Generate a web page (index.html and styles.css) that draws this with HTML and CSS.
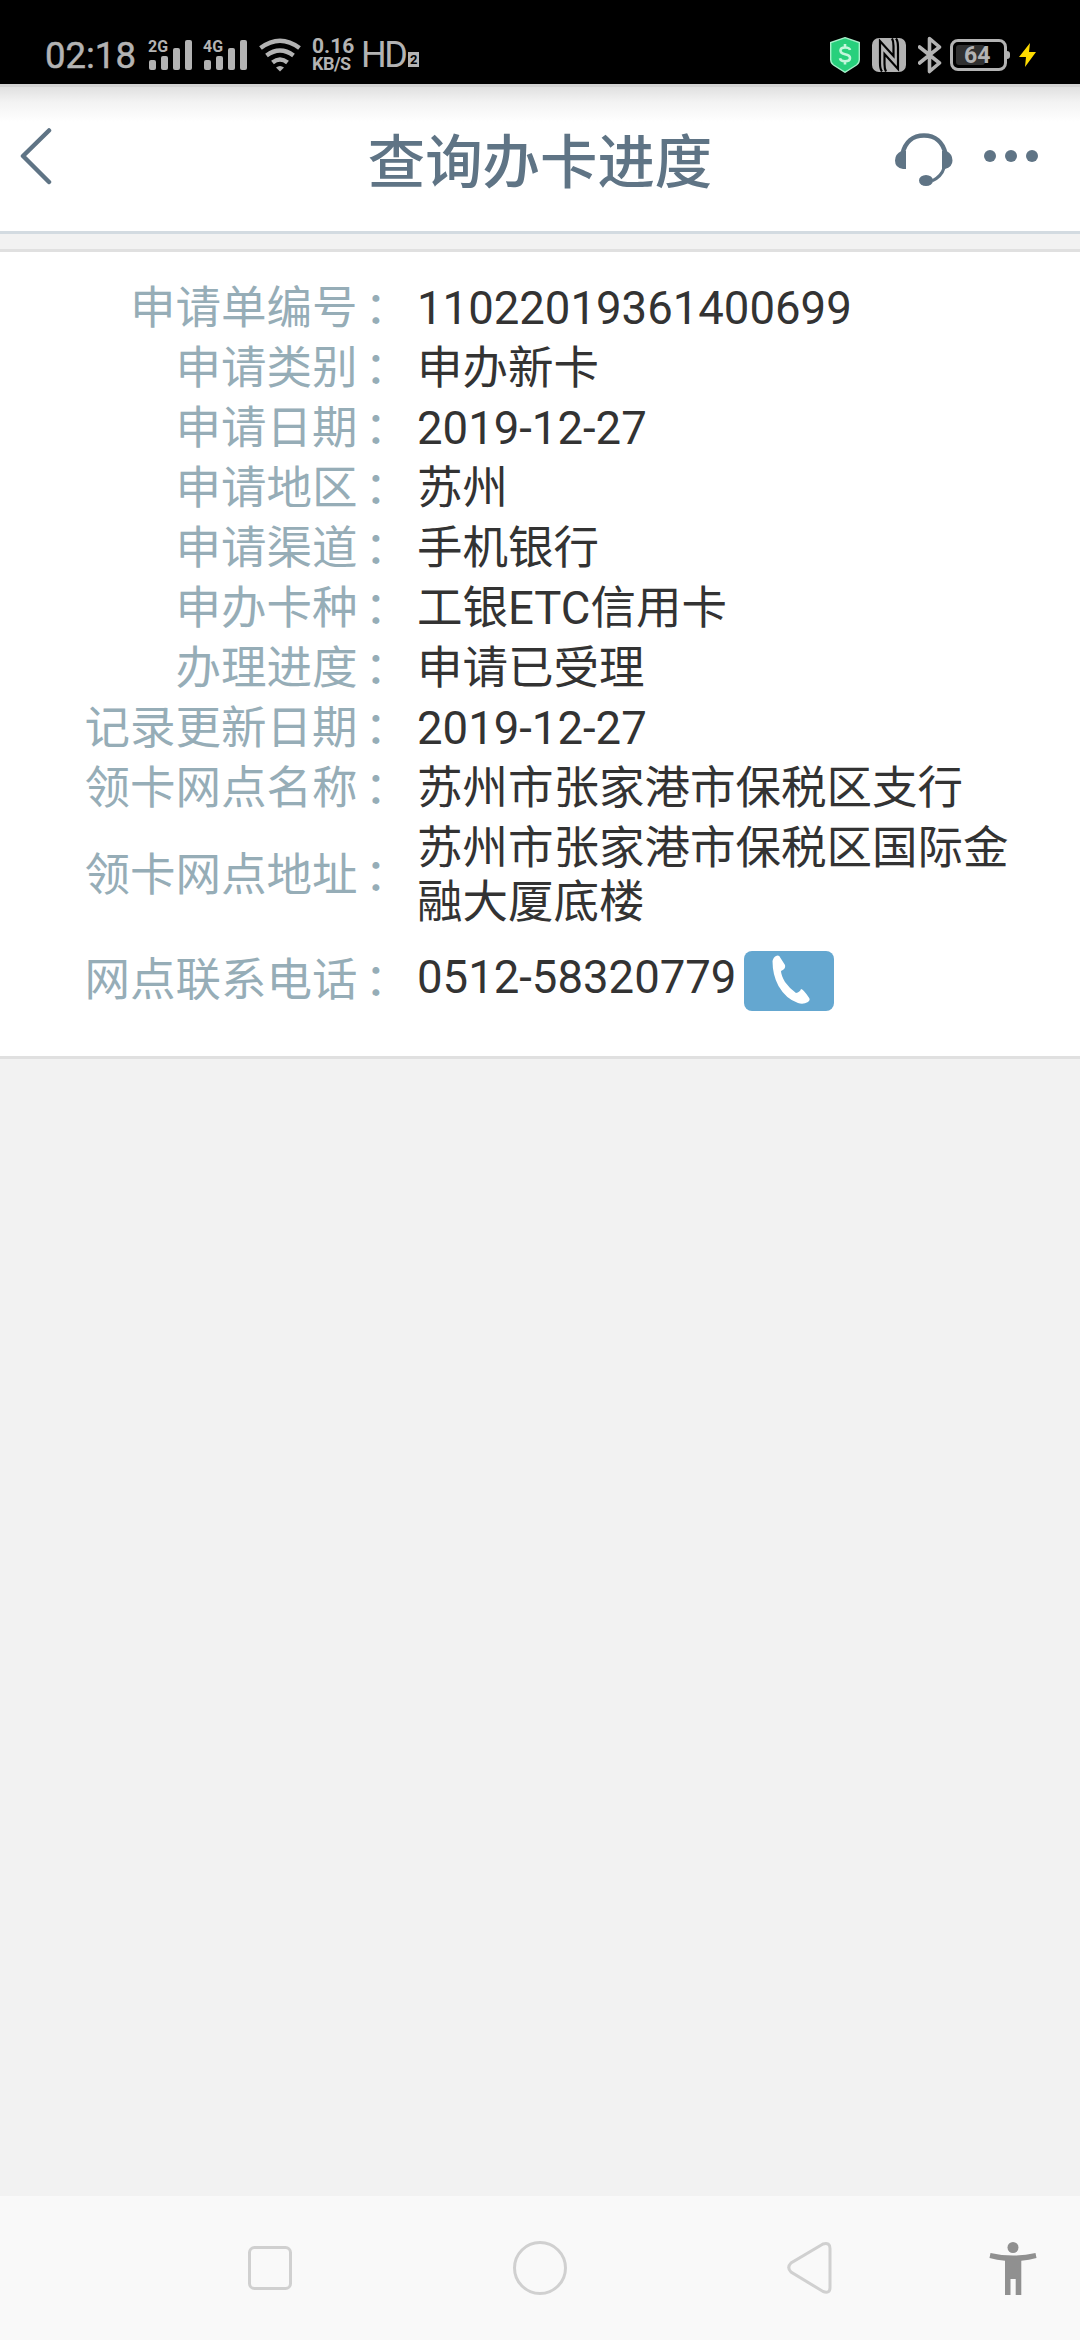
FILE: index.html
```
<!DOCTYPE html>
<html lang="zh-CN">
<head>
  <meta charset="UTF-8" />
  <meta name="viewport" content="width=device-width, initial-scale=1.0"/>
  <title>查询办卡进度</title>
  <link rel="stylesheet" href="styles.css">
</head>
<body>
  <div class="status-bar">
    <span class="time">02:18</span>
    <svg class="signal" width="44" height="32" viewBox="0 0 44 32">
      <text class="net" x="0" y="13" textLength="20" lengthAdjust="spacingAndGlyphs">2G</text>
      <rect x="1" y="21" width="7" height="10" rx="2"/>
      <rect x="13" y="17" width="7" height="14" rx="2"/>
      <rect x="25" y="9" width="7" height="22" rx="2"/>
      <rect x="37" y="1" width="7" height="30" rx="2"/>
    </svg>
    <svg class="signal second" width="44" height="32" viewBox="0 0 44 32">
      <text class="net" x="0" y="13" textLength="20" lengthAdjust="spacingAndGlyphs">4G</text>
      <rect x="1" y="21" width="7" height="10" rx="2"/>
      <rect x="13" y="17" width="7" height="14" rx="2"/>
      <rect x="25" y="9" width="7" height="22" rx="2"/>
      <rect x="37" y="1" width="7" height="30" rx="2"/>
    </svg>
    <svg class="wifi" width="42" height="34" viewBox="0 0 42 34">
      <path class="wave" d="M1.500 10Q21-4.500 40.500 10M7.500 17.500Q21 7.500 34.500 17.500M13.500 24.500Q21 18.500 28.500 24.500"/>
      <path d="M17 29.500Q21 26.500 25 29.500L21 33.500Z"/>
    </svg>
    <div class="speed"><span>0.16</span><span class="unit">KB/S</span></div>
    <span class="hd">HD</span>
    <span class="sim">2</span>

    <div class="status-right">
      <svg width="30" height="36" viewBox="0 0 30 36">
        <path d="M15 .7 29.300 5.500V22.500Q29.300 26 26.500 28L15 35.300 3.500 28Q.7 26 .7 22.500V5.500Z" fill="#27d07c" stroke="#a5f0c9" stroke-width="1.400"/>
        <path d="M20 13Q19.500 10.500 15 10.500 10.500 10.500 10.500 13.500 10.500 16.500 15 17.200 20 18 20 21 20 24.200 15 24.200 10.500 24.200 10 21.200M15 7V11M15 24V27.500" fill="none" stroke="#c3f6dc" stroke-width="2.600"/>
      </svg>
      <svg class="nfc" width="34" height="34" viewBox="0 0 34 34">
        <rect width="34" height="34" rx="7" fill="#b3b3b3"/>
        <path d="M10 33.500Q8 31 8 25V3L21.500 18V8Q21.500 3 20 .5M24 .5Q26 3 26 9V31L12.500 16V26Q12.500 31 14 33.500" fill="none" stroke="#000" stroke-width="2.200"/>
      </svg>
      <svg class="bluetooth" width="24" height="38" viewBox="0 0 24 38">
        <path d="M1.500 11 21.500 27 11.500 35.500V2.500L21.500 11 1.500 27" fill="none" stroke="#b3b3b3" stroke-width="3.600" stroke-linejoin="round" stroke-linecap="round"/>
      </svg>
      <div class="battery"><span class="level">64</span></div>
      <svg class="bolt" width="17" height="24" viewBox="0 0 17 24">
        <path d="M11 0 0 14H7L6 24 17 9H10Z" fill="#ffdc00"/>
      </svg>
    </div>
  </div>

  <header class="header">
    <svg class="back" width="34" height="60" viewBox="0 0 34 60">
      <path d="M29 4.500 3 30 29 56"/>
    </svg>
    <h1>查询办卡进度</h1>
    <div class="actions">
      <svg width="58" height="54" viewBox="0 0 58 54">
        <path class="line" d="M7.500 21C10 9 18 2.500 29 2.500S48 9 50.500 21" stroke-width="4.500"/>
        <path d="M11 18V36H8Q0 35 0 27.500 0 21 6.500 18ZM47 18V36H50Q57.500 34 57.500 27.500 57.500 21 51.500 18Z"/>
        <path class="line" d="M49 35Q46.500 43.500 37 48" stroke-width="3"/>
        <ellipse cx="31" cy="47.500" rx="7" ry="5.500"/>
      </svg>
      <svg class="more" width="54" height="12" viewBox="0 0 54 12">
        <circle cx="6" cy="6" r="6"/>
        <circle cx="27" cy="6" r="6"/>
        <circle cx="48" cy="6" r="6"/>
      </svg>
    </div>
  </header>

  <main class="detail">
    <dl>
      <dt>申请单编号<i>：</i></dt><dd>11022019361400699</dd>
      <dt>申请类别<i>：</i></dt><dd>申办新卡</dd>
      <dt>申请日期<i>：</i></dt><dd>2019-12-27</dd>
      <dt>申请地区<i>：</i></dt><dd>苏州</dd>
      <dt>申请渠道<i>：</i></dt><dd>手机银行</dd>
      <dt>申办卡种<i>：</i></dt><dd>工银ETC信用卡</dd>
      <dt>办理进度<i>：</i></dt><dd>申请已受理</dd>
      <dt>记录更新日期<i>：</i></dt><dd>2019-12-27</dd>
      <dt>领卡网点名称<i>：</i></dt><dd>苏州市张家港市保税区支行</dd>
      <dt>领卡网点地址<i>：</i></dt><dd>苏州市张家港市保税区国际金融大厦底楼</dd>
      <dt>网点联系电话<i>：</i></dt>
      <dd class="phone">
        <span>0512-58320779</span>
        <button class="call" aria-label="拨打电话">
          <svg width="38" height="50" viewBox="0 0 38 50">
            <path d="M4 1Q7-.5 8.500 3L13 10Q14 14 9 16 9 20 13 27 18 34 24 38 28 37 29 34 31 34 36.500 42 39 45 36 47 31 50 26 48 14 44 6.500 31 .5 20 .5 6 1.500 2 4 1Z"/>
          </svg>
        </button>
      </dd>
    </dl>
  </main>

  <nav class="nav-bar">
    <svg viewBox="0 0 60 60"><rect class="line" x="9.500" y="9.500" width="41" height="41" rx="5"/></svg>
    <svg viewBox="0 0 60 60"><circle class="line" cx="30" cy="30" r="25.500"/></svg>
    <svg viewBox="0 0 60 60"><path class="line" d="M43 6 11 25Q6.500 29.500 11 34L43 53.500Q50 56 50 49.500V10.500Q50 4 43 6Z"/></svg>
    <svg class="access" viewBox="0 0 60 60">
      <circle cx="30" cy="9.500" r="5.500"/>
      <path d="M7.500 15Q30 20 52.500 15L53.500 20Q46 22 38.300 22.800V57H32.700V41H27.500V57H22V22.800Q14 22 6.500 20Z"/>
    </svg>
  </nav>
</body>
</html>
```
FILE: styles.css
```
* {
  box-sizing: border-box;
}

body {
  margin: 0;
  height: 2340px;
  display: flex;
  flex-direction: column;
  font-family: Roboto, 'Noto Sans CJK SC', sans-serif;
  background-color: #f2f2f2;
}

svg {
  display: block;
  flex: none;
}

/* status bar */
.status-bar {
  height: 84px;
  flex: none;
  display: flex;
  align-items: center;
  padding: 25px 44px 0 45px;
  background-color: #000;
  color: #b3b3b3;
  fill: #b3b3b3;
}

.time {
  width: 103px;
  padding-top: 2px;
  font-size: 36.5px;
  line-height: 58px;
  -webkit-text-stroke: 0.5px #b3b3b3;
}

.signal {
  overflow: visible;
}

.second {
  margin-left: 11px;
}

.net {
  font-size: 17px;
  font-weight: 700;
}

.wifi {
  margin-left: 12px;
}

.wave {
  fill: none;
  stroke: #b3b3b3;
  stroke-width: 4.5;
}

.speed {
  display: flex;
  flex-direction: column;
  width: 49px;
  margin-left: 11px;
  font-size: 21px;
  font-weight: 700;
  line-height: 18px;
}

.unit {
  font-size: 18px;
  letter-spacing: -0.5px;
}

.hd {
  font-size: 36px;
  line-height: 58px;
  letter-spacing: -2.5px;
}

.sim {
  width: 11px;
  height: 15px;
  margin: 10px 0 0 3px;
  background-color: #b3b3b3;
  color: #000;
  font-size: 13px;
  font-weight: 700;
  line-height: 15px;
  text-align: center;
}

.status-right {
  display: flex;
  align-items: center;
  margin-left: auto;
}

.nfc {
  margin-left: 12px;
}

.bluetooth {
  margin-left: 12px;
}

.battery {
  position: relative;
  width: 57px;
  height: 32px;
  margin-left: 8px;
  padding: 3px;
  border: 3px solid #b3b3b3;
  border-radius: 8px;
}

.battery::after {
  content: '';
  position: absolute;
  right: -6px;
  top: 9px;
  width: 3px;
  height: 8px;
  border-radius: 0 3px 3px 0;
  background-color: #b3b3b3;
}

.level {
  display: block;
  width: 29px;
  height: 20px;
  padding-left: 8px;
  border-radius: 3px;
  background-color: #303030;
  font-size: 23px;
  font-weight: 700;
  line-height: 21px;
}

.bolt {
  margin-left: 12px;
}

/* title bar */
.header {
  height: 150px;
  flex: none;
  display: grid;
  grid-template-columns: 300px 1fr 300px;
  align-items: center;
  padding: 0 42px 0 20px;
  border-bottom: 3px solid #d3dbe1;
  background: linear-gradient(#d2d2d2 0, #d2d2d2 3px, #e0e0e0 3px, #f3f3f3 18px, #fff 38px);
  fill: #5f7485;
}

.back {
  margin-top: -3px;
}

.back path,
.header .line {
  fill: none;
  stroke: #5f7485;
}

.back path {
  stroke-width: 4.5;
  stroke-linecap: round;
  stroke-linejoin: round;
}

h1 {
  margin: 13px -22px 0 0;
  color: #5f7485;
  font-size: 57.4px;
  font-weight: 500;
  line-height: 80px;
  text-align: center;
  white-space: nowrap;
}

.actions {
  display: flex;
  align-items: center;
  justify-content: flex-end;
  padding-top: 4px;
}

.more {
  margin: -8px 0 0 31px;
}

/* application details */
.detail {
  margin-top: 15px;
  padding: 27px 60px 27px 0;
  border-top: 3px solid #e0e0e0;
  border-bottom: 3px solid #e0e0e0;
  background-color: #fff;
}

dl {
  display: grid;
  grid-template-columns: 403px 1fr;
  grid-template-rows: repeat(9, 60px) 114px 96px;
  column-gap: 14px;
  align-items: center;
  margin: 0;
  font-size: 45.5px;
  line-height: 54px;
}

dt {
  color: #96adb7;
  text-align: right;
}

dt i {
  display: inline-block;
  padding-left: 7px;
  margin-right: -7px;
  font-style: normal;
}

dd {
  margin: 0;
  color: #333;
}

.phone {
  display: flex;
  align-items: center;
}

.phone span {
  margin-top: -6px;
}

.call {
  display: flex;
  align-items: center;
  justify-content: center;
  width: 90px;
  height: 60px;
  margin: 0 0 0 8px;
  padding: 0 0 2px 4px;
  border: none;
  border-radius: 8px;
  background-color: #64a7d0;
  fill: #fff;
}

/* system navigation */
.nav-bar {
  height: 144px;
  flex: none;
  display: flex;
  align-items: center;
  gap: 210px;
  margin-top: auto;
  padding-left: 240px;
  background-color: #f9f9f9;
}

.nav-bar svg {
  width: 60px;
  height: 60px;
}

.nav-bar .line {
  fill: none;
  stroke: #d0d0d0;
  stroke-width: 3;
}

.nav-bar .access {
  margin-left: -67px;
  fill: #909090;
}
```
